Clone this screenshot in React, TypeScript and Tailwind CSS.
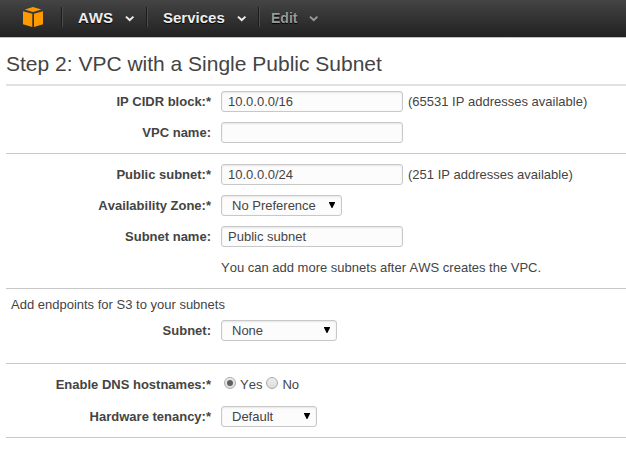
import type { ReactNode } from "react";

function Caret({ color }: { color: string }) {
  return (
    <svg width="10" height="7" viewBox="0 0 10 7" className="mt-[4px] shrink-0" fill={color}>
      <path d="M0.3 1.2 L1.6 0 L4.7 2.7 L7.8 0 L9.1 1.2 L4.7 5.6 Z" />
    </svg>
  );
}

function Divider() {
  return <div className="h-5 w-[2px] shrink-0 border-l border-[#1c1c1c] bg-[#4c4c4c]" />;
}

function Logo() {
  return (
    <svg width="20" height="21" viewBox="0 0 20 21" fill="#ff9900" className="shrink-0">
      <path d="M1.8 2.4 L10 0 L18.4 2.4 L10 5.1 Z" />
      <path d="M0 4.2 L9.3 6.8 V20 L0 17.3 Z" />
      <path d="M11 6.8 L20 4.2 V17.3 L11 20 Z" />
    </svg>
  );
}

function NavItem({
  label,
  className,
  labelClass = "",
  color = "#eeeeee",
}: {
  label: string;
  className: string;
  labelClass?: string;
  color?: string;
}) {
  return (
    <div className={`flex shrink-0 items-center justify-between font-bold ${className}`}>
      <span className={`[text-shadow:0_1px_1px_#000] ${labelClass}`}>{label}</span>
      <Caret color={color} />
    </div>
  );
}

function Row({ label, children, className = "h-[21px]" }: { label: string; children?: ReactNode; className?: string }) {
  return (
    <div className={`flex items-center ${className}`}>
      <div className="mr-[10px] w-[205px] shrink-0 text-right font-bold">{label}</div>
      {children}
    </div>
  );
}

const box =
  "h-[21px] shrink-0 rounded-[3px] border border-[#c8c8c8] bg-[#fcfcfc] shadow-[inset_0_1px_2px_#e6e6e6]";

function Field({ value }: { value: string }) {
  return (
    <input type="text" defaultValue={value} className={`${box} mr-[5px] w-[182px] px-[6px] outline-none`} />
  );
}

function Select({ value, className }: { value: string; className: string }) {
  return (
    <button type="button" className={`${box} flex items-center justify-between pr-[6px] pl-[10px] ${className}`}>
      <span>{value}</span>
      <svg width="6" height="6" viewBox="0 0 6 6" className="mb-[2px]" fill="#000">
        <path d="M0 0 H6 V0.8 L3.4 6 H2.6 L0 0.8 Z" />
      </svg>
    </button>
  );
}

function Radio({ checked = false }: { checked?: boolean }) {
  return (
    <span className="mb-[3px] flex size-3 shrink-0 items-center justify-center rounded-full border border-[#aaaaaa] bg-linear-to-b from-[#eeeeee] to-[#dcdcdc]">
      {checked && <span className="size-[6px] rounded-full bg-[#606060]" />}
    </span>
  );
}

export default function App() {
  return (
    <div className="h-[463px] w-[626px] overflow-hidden bg-white font-['Liberation_Sans',Arial,sans-serif] text-[13px] leading-[15px] text-[#444444] [font-kerning:none]">
      <header className="flex h-[38px] items-start border-b border-[#c0c0c0] bg-linear-to-b from-[#444444] to-[#222222] pt-[7px] pl-[23px]">
        <Logo />
        <div className="ml-[18px] flex h-5 items-center">
          <Divider />
          <NavItem label="AWS" className="mr-[11px] ml-[15px] h-5 w-[57px] text-[15px] text-[#eeeeee]" />
          <Divider />
          <NavItem label="Services" className="mr-[11px] ml-[15px] h-5 w-[84px] text-[15px] text-[#eeeeee]" />
          <Divider />
          <NavItem
            label="Edit"
            color="#999999"
            labelClass="pt-[2px]"
            className="ml-[11px] h-5 w-[48px] text-[14px] text-[#999999]"
          />
        </div>
      </header>

      <main className="pl-[6px]">
        <h1 className="h-[48px] border-b-2 border-[#e1e1e1] pt-[13px] text-[21px] leading-[26px] [font-kerning:normal]">
          Step 2: VPC with a Single Public Subnet
        </h1>

        <section className="flex h-[68px] flex-col gap-[10px] border-b border-[#c8c8c8] pt-[5px]">
          <Row label="IP CIDR block:*">
            <Field value="10.0.0.0/16" />
            <span>(65531 IP addresses available)</span>
          </Row>
          <Row label="VPC name:">
            <Field value="" />
          </Row>
        </section>

        <section className="flex h-[135px] flex-col gap-[10px] border-b border-[#c8c8c8] pt-[10px]">
          <Row label="Public subnet:*">
            <Field value="10.0.0.0/24" />
            <span>(251 IP addresses available)</span>
          </Row>
          <Row label="Availability Zone:*">
            <Select value="No Preference" className="w-[121px]" />
          </Row>
          <Row label="Subnet name:">
            <Field value="Public subnet" />
          </Row>
          <Row label="">You can add more subnets after AWS creates the VPC.</Row>
        </section>

        <section className="h-[75px] border-b border-[#c8c8c8] pt-[8px]">
          <p className="mb-[8px] pl-[5px]">Add endpoints for S3 to your subnets</p>
          <Row label="Subnet:">
            <Select value="None" className="w-[116px]" />
          </Row>
        </section>

        <section className="h-[74px] border-b border-[#c8c8c8] pt-[10px]">
          <Row label="Enable DNS hostnames:*" className="mb-[11px] h-[21px]">
            <div className="flex items-center pl-[3px]">
              <Radio checked />
              <span className="mr-[4px] ml-[4px]">Yes</span>
              <Radio />
              <span className="ml-[4px]">No</span>
            </div>
          </Row>
          <Row label="Hardware tenancy:*">
            <Select value="Default" className="w-[96px]" />
          </Row>
        </section>
      </main>
    </div>
  );
}
